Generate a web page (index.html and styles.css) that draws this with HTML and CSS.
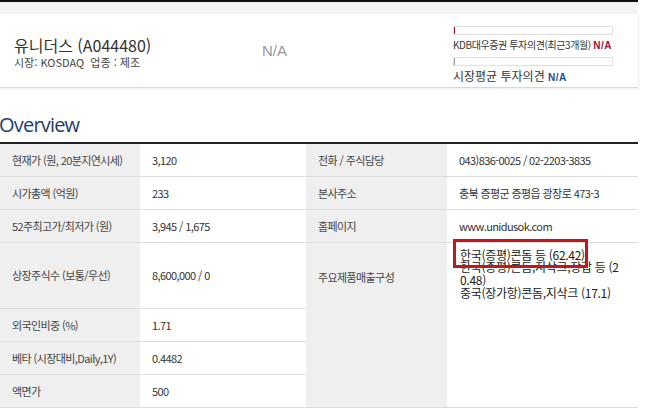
FILE: index.html
```html
<!DOCTYPE html>
<html lang="ko">
<head>
    <meta charset="UTF-8">
    <meta name="viewport" content="width=device-width, initial-scale=1.0">
    <title>유니더스 - Overview</title>
    <link rel="stylesheet" href="styles.css">
</head>
<body>
    <div class="page">
        <div class="topbar"></div>

        <div class="header">
            <div class="corp">
                <div class="corp-name">유니더스 (A044480)</div>
                <div class="corp-info">시장: KOSDAQ &nbsp;업종 : 제조</div>
            </div>
            <div class="corp-price">N/A</div>
            <div class="opinion">
                <div class="bar"><span class="tick red"></span></div>
                <div class="opinion-text">KDB대우증권 투자의견(최근3개월) <b class="na-red">N/A</b></div>
                <div class="bar second"><span class="tick gray"></span></div>
                <div class="opinion-text market">시장평균 투자의견 <b class="na-blue">N/A</b></div>
            </div>
        </div>

        <h2 class="section-title">Overview</h2>

        <table class="overview">
            <tr>
                <th>현재가 (원, 20분지연시세)</th>
                <td>3,120</td>
                <th>전화 / 주식담당</th>
                <td>043)836-0025 / 02-2203-3835</td>
            </tr>
            <tr>
                <th>시가총액 (억원)</th>
                <td>233</td>
                <th>본사주소</th>
                <td>충북 증평군 증평읍 광장로 473-3</td>
            </tr>
            <tr>
                <th>52주최고가/최저가 (원)</th>
                <td>3,945 / 1,675</td>
                <th>홈페이지</th>
                <td>www.unidusok.com</td>
            </tr>
            <tr class="tall">
                <th>상장주식수 (보통/우선)</th>
                <td>8,600,000 / 0</td>
                <th rowspan="4" class="products-label">주요제품매출구성</th>
                <td rowspan="4" class="products">
                    <span class="marked">한국(증평)콘돔 등 (62.42)</span><br>
                    한국(증평)콘돔,지삭크,장갑 등 (20.48)<br>
                    중국(장가항)콘돔,지삭크 (17.1)
                </td>
            </tr>
            <tr>
                <th>외국인비중 (%)</th>
                <td>1.71</td>
            </tr>
            <tr>
                <th>베타 (시장대비,Daily,1Y)</th>
                <td>0.4482</td>
            </tr>
            <tr>
                <th>액면가</th>
                <td>500</td>
            </tr>
        </table>
    </div>
</body>
</html>
```

FILE: styles.css
```css
body {
    margin: 0;
    background: #fff;
    font-family: "Noto Sans CJK KR", "Noto Sans", sans-serif;
    color: #333;
}
.page {
    width: 638px;
}
.topbar {
    height: 12px;
    border-top: 2px solid #111;
    background-color: #f4f4f4;
}
.header {
    display: flex;
    height: 73px;
    border-bottom: 1px solid #d8d8d8;
    box-shadow: 1px 1px 2px rgba(0, 0, 0, 0.08);
}
.corp {
    width: 262px;
    padding: 21px 0 0 14px;
    box-sizing: border-box;
}
.corp-name {
    font-size: 16px;
    line-height: 20px;
    color: #333;
}
.corp-info {
    margin-top: 1px;
    font-size: 11px;
    line-height: 13px;
    color: #444;
}
.corp-price {
    width: 177px;
    padding-top: 28px;
    font-family: "Liberation Sans", sans-serif;
    font-size: 15px;
    color: #999;
}
.opinion {
    width: 160px;
    padding-top: 12px;
    margin-left: 14px;
}
.bar {
    position: relative;
    height: 7px;
    border: 1px solid #e2e2e2;
    background: #fff;
}
.bar.second {
    margin-top: 4px;
}
.tick {
    display: block;
    width: 1px;
    height: 7px;
}
.tick.red {
    background-color: #b3122c;
}
.tick.gray {
    background-color: #999;
}
.opinion-text {
    font-size: 10px;
    line-height: 14px;
    margin-top: 3px;
    letter-spacing: -0.4px;
    color: #333;
    white-space: nowrap;
}
.opinion-text.market {
    font-size: 12px;
    letter-spacing: 0;
}
.opinion-text.market b {
    font-size: 10px;
}
.na-red {
    color: #a3152d;
    font-family: "Liberation Sans", sans-serif;
    letter-spacing: 0.5px;
}
.na-blue {
    color: #1d4d8f;
    font-family: "Liberation Sans", sans-serif;
    letter-spacing: 0.5px;
}
.section-title {
    margin: 22px 0 0 -1px;
    font-family: "Open Sans", sans-serif;
    font-weight: normal;
    font-size: 20px;
    line-height: 30px;
    letter-spacing: -0.8px;
    color: #1b3d6d;
}
.overview {
    width: 638px;
    margin-top: 2px;
    border-collapse: collapse;
    border-top: 2px solid #222;
    font-size: 11px;
    table-layout: fixed;
}
.overview th,
.overview td {
    height: 33px;
    padding: 0 12px;
    border-bottom: 1px solid #dcdcdc;
    text-align: left;
    font-weight: normal;
    letter-spacing: -0.6px;
    box-sizing: border-box;
}
.overview th {
    background-color: #efefef;
    color: #444;
}
.overview th:nth-child(1) { width: 140px; }
.overview td:nth-child(2) { width: 166px; }
.overview th:nth-child(3) { width: 141px; }
.overview tr.tall th,
.overview tr.tall td {
    height: 66px;
}
.overview .products-label {
    vertical-align: top;
    padding-top: 26px;
}
.overview .products {
    vertical-align: top;
    padding: 6px 13px 0 13px;
    font-size: 12px;
    line-height: 12.7px;
    letter-spacing: -0.3px;
    word-break: break-all;
    color: #222;
}
.marked {
    position: relative;
}
.marked::after {
    content: "";
    position: absolute;
    left: -7px;
    top: -7px;
    right: -3px;
    bottom: -5px;
    border: 3px solid #c3171f;
}
```
